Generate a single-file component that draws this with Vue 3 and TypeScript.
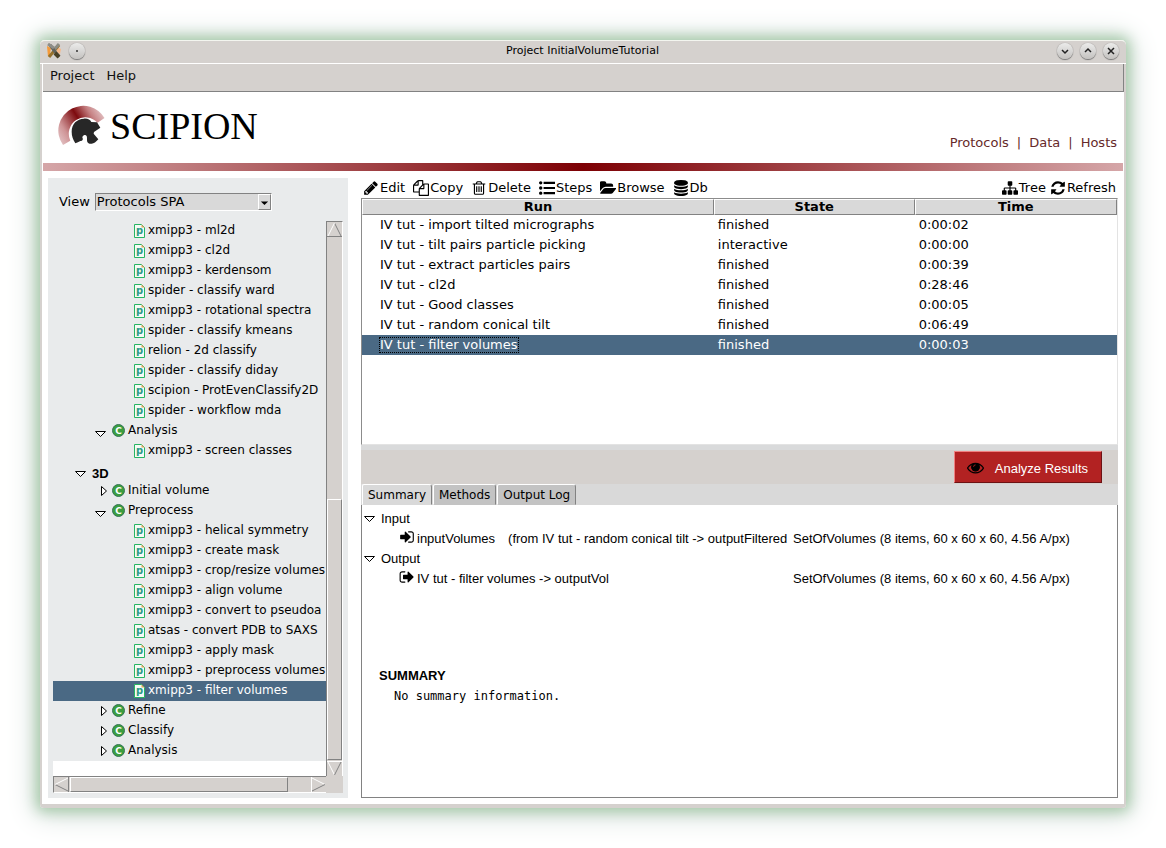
<script setup lang="ts">
import { ref } from 'vue'

interface TreeRow {
  kind: 'root' | 'group' | 'protocol'
  label: string
  open?: boolean
}

interface Run {
  name: string
  state: string
  time: string
}

interface Tool {
  label: string
  icon: string
}

const protocol = (label: string): TreeRow => ({ kind: 'protocol', label })
const group = (label: string, open = false): TreeRow => ({ kind: 'group', label, open })

const rows: TreeRow[] = [
  protocol('xmipp3 - ml2d'),
  protocol('xmipp3 - cl2d'),
  protocol('xmipp3 - kerdensom'),
  protocol('spider - classify ward'),
  protocol('xmipp3 - rotational spectra'),
  protocol('spider - classify kmeans'),
  protocol('relion - 2d classify'),
  protocol('spider - classify diday'),
  protocol('scipion - ProtEvenClassify2D'),
  protocol('spider - workflow mda'),
  group('Analysis', true),
  protocol('xmipp3 - screen classes'),
  { kind: 'root', label: '3D', open: true },
  group('Initial volume'),
  group('Preprocess', true),
  protocol('xmipp3 - helical symmetry'),
  protocol('xmipp3 - create mask'),
  protocol('xmipp3 - crop/resize volumes'),
  protocol('xmipp3 - align volume'),
  protocol('xmipp3 - convert to pseudoa'),
  protocol('atsas - convert PDB to SAXS'),
  protocol('xmipp3 - apply mask'),
  protocol('xmipp3 - preprocess volumes'),
  protocol('xmipp3 - filter volumes'),
  group('Refine'),
  group('Classify'),
  group('Analysis'),
]

const runs: Run[] = [
  { name: 'IV tut - import tilted micrographs', state: 'finished', time: '0:00:02' },
  { name: 'IV tut - tilt pairs particle picking', state: 'interactive', time: '0:00:00' },
  { name: 'IV tut - extract particles pairs', state: 'finished', time: '0:00:39' },
  { name: 'IV tut - cl2d', state: 'finished', time: '0:28:46' },
  { name: 'IV tut - Good classes', state: 'finished', time: '0:00:05' },
  { name: 'IV tut - random conical tilt', state: 'finished', time: '0:06:49' },
  { name: 'IV tut - filter volumes', state: 'finished', time: '0:00:03' },
]

const editTools: Tool[] = [
  { label: 'Edit', icon: 'M491 1536l91-91-235-235-91 91v107h128v128h107zm523-928q0-22-22-22-10 0-17 7l-542 542q-7 7-7 17 0 22 22 22 10 0 17-7l542-542q7-7 7-17zm-54-192l416 416-832 832h-416v-416zm683 96q0 53-37 90l-166 166-416-416 166-165q36-38 90-38 53 0 91 38l235 234q37 39 37 91z' },
  { label: 'Copy', icon: 'M1696 384q40 0 68 28t28 68v1216q0 40-28 68t-68 28h-960q-40 0-68-28t-28-68v-288h-544q-40 0-68-28t-28-68v-672q0-40 20-88t48-76l408-408q28-28 76-48t88-20h416q40 0 68 28t28 68v328q68-40 128-40h416zm-544 213l-299 299h299v-299zm-640-384l-299 299h299v-299zm196 647l316-316v-416h-384v416q0 40-28 68t-68 28h-416v640h512v-256q0-40 20-88t48-76zm956 804v-1152h-384v416q0 40-28 68t-68 28h-416v640h896z' },
  { label: 'Delete', icon: 'M704 736v576q0 14-9 23t-23 9h-64q-14 0-23-9t-9-23v-576q0-14 9-23t23-9h64q14 0 23 9t9 23zm256 0v576q0 14-9 23t-23 9h-64q-14 0-23-9t-9-23v-576q0-14 9-23t23-9h64q14 0 23 9t9 23zm256 0v576q0 14-9 23t-23 9h-64q-14 0-23-9t-9-23v-576q0-14 9-23t23-9h64q14 0 23 9t9 23zm128 724v-948h-896v948q0 22 7 40.5t14.5 27 10.5 8.5h832q3 0 10.5-8.5t14.5-27 7-40.5zm-672-1076h448l-48-117q-7-9-17-11h-317q-10 2-17 11zm928 32v64q0 14-9 23t-23 9h-96v948q0 83-47 143.5t-113 60.5h-832q-66 0-113-58.5t-47-141.5v-952h-96q-14 0-23-9t-9-23v-64q0-14 9-23t23-9h309l70-167q15-37 54-63t79-26h320q40 0 79 26t54 63l70 167h309q14 0 23 9t9 23z' },
  { label: 'Steps', icon: 'M192 128a192 192 0 1 1 0 384a192 192 0 1 1 0-384zM192 704a192 192 0 1 1 0 384a192 192 0 1 1 0-384zM192 1280a192 192 0 1 1 0 384a192 192 0 1 1 0-384zM512 200h1280v240h-1280zM512 776h1280v240h-1280zM512 1352h1280v240h-1280z' },
  { label: 'Browse', icon: 'M1815 952q0 31-31 66l-336 396q-43 51-120.5 86.5t-143.5 35.5h-1088q-34 0-60.5-13t-26.5-43q0-31 31-66l336-396q43-51 120.5-86.5t143.5-35.5h1088q34 0 60.5 13t26.5 43zm-343-344v160h-832q-94 0-197 47.5t-164 119.5l-337 396-5 6q0-4-.5-12.5t-.5-12.5v-960q0-92 66-158t158-66h320q92 0 158 66t66 158v32h544q92 0 158 66t66 158z' },
  { label: 'Db', icon: 'M896 768q237 0 443-43t325-127v170q0 69-103 128t-280 93.5-385 34.5-385-34.5-280-93.5-103-128v-170q119 84 325 127t443 43zm0 768q237 0 443-43t325-127v170q0 69-103 128t-280 93.5-385 34.5-385-34.5-280-93.5-103-128v-170q119 84 325 127t443 43zm0-384q237 0 443-43t325-127v170q0 69-103 128t-280 93.5-385 34.5-385-34.5-280-93.5-103-128v-170q119 84 325 127t443 43zm0-1152q208 0 385 34.5t280 93.5 103 128v128q0 69-103 128t-280 93.5-385 34.5-385-34.5-280-93.5-103-128v-128q0-69 103-128t280-93.5 385-34.5z' },
]

const viewTools: Tool[] = [
  { label: 'Tree', icon: 'M1792 1248v320q0 40-28 68t-68 28h-320q-40 0-68-28t-28-68v-320q0-40 28-68t68-28h96v-192h-512v192h96q40 0 68 28t28 68v320q0 40-28 68t-68 28h-320q-40 0-68-28t-28-68v-320q0-40 28-68t68-28h96v-192h-512v192h96q40 0 68 28t28 68v320q0 40-28 68t-68 28h-320q-40 0-68-28t-28-68v-320q0-40 28-68t68-28h96v-192q0-52 38-90t90-38h512v-192h-96q-40 0-68-28t-28-68v-320q0-40 28-68t68-28h320q40 0 68 28t28 68v320q0 40-28 68t-68 28h-96v192h512q52 0 90 38t38 90v192h96q40 0 68 28t28 68z' },
  { label: 'Refresh', icon: 'M1639 1056q0 5-1 7-64 268-268 434.5t-478 166.5q-146 0-282.5-55t-243.5-157l-129 129q-19 19-45 19t-45-19-19-45v-448q0-26 19-45t45-19h448q26 0 45 19t19 45-19 45l-137 137q71 66 161 102t187 36q134 0 250-65t186-179q11-17 53-117 8-23 30-23h192q13 0 22.5 9.5t9.5 22.5zm25-800v448q0 26-19 45t-45 19h-448q-26 0-45-19t-19-45 19-45l138-138q-148-137-349-137-134 0-250 65t-186 179q-11 17-53 117-8 23-30 23h-199q-13 0-22.5-9.5t-9.5-22.5v-7q65-268 270-434.5t480-166.5q146 0 284 55.5t245 156.5l130-129q19-19 45-19t45 19 19 45z' },
]

const signIn = 'M1312 896q0 26-19 45l-544 544q-19 19-45 19t-45-19-19-45v-288h-448q-26 0-45-19t-19-45v-384q0-26 19-45t45-19h448v-288q0-26 19-45t45-19 45 19l544 544q19 19 19 45zm352-352v704q0 119-84.5 203.5t-203.5 84.5h-320q-13 0-22.5-9.5t-9.5-22.5q0-4-1-20t-.5-26.5 3-23.5 10-19.5 20.5-6.5h320q66 0 113-47t47-113v-704q0-66-47-113t-113-47h-312l-11.5-1-11.5-3-8-5.5-7-9-2-13.5q0-4-1-20t-.5-26.5 3-23.5 10-19.5 20.5-6.5h320q119 0 203.5 84.5t84.5 203.5z'
const signOut = 'M704 1440q0 4 1 20t.5 26.5-3 23.5-10 19.5-20.5 6.5h-320q-119 0-203.5-84.5t-84.5-203.5v-704q0-119 84.5-203.5t203.5-84.5h320q13 0 22.5 9.5t9.5 22.5q0 4 1 20t.5 26.5-3 23.5-10 19.5-20.5 6.5h-320q-66 0-113 47t-47 113v704q0 66 47 113t113 47h312l11.5 1 11.5 3 8 5.5 7 9 2 13.5zm928-544q0 26-19 45l-544 544q-19 19-45 19t-45-19-19-45v-288h-448q-26 0-45-19t-19-45v-384q0-26 19-45t45-19h448v-288q0-26 19-45t45-19 45 19l544 544q19 19 19 45z'
const eye = 'M1664 960q-152-236-381-353 61 104 61 225 0 185-131.5 316.5t-316.5 131.5-316.5-131.5-131.5-316.5q0-121 61-225-229 117-381 353 133 205 333.5 326.5t434.5 121.5 434.5-121.5 333.5-326.5zM1792 960q0 34-20 69-140 230-376.5 368.5t-499.5 138.5-499.5-139-376.5-368q-20-35-20-69t20-69q140-229 376.5-368t499.5-139 499.5 139 376.5 368q20 35 20 69z'

const tabs = ['Summary', 'Methods', 'Output Log']
const activeTab = ref('Summary')
const selectedProtocol = ref('xmipp3 - filter volumes')
const selectedRun = ref('IV tut - filter volumes')
const view = ref('Protocols SPA')
</script>

<template>
  <div class="window">
    <header class="titlebar">
      <div class="title-side">
        <svg class="app-icon" viewBox="0 0 16 16" aria-hidden="true">
          <path d="M1 3L5 5L4 11L2 14Z" fill="#f59a3a" />
          <path d="M11 4L15 6L14 11L11 9Z" fill="#f7b98a" />
          <path d="M3 14L13 2" stroke="#96712c" stroke-width="3" />
          <path d="M7 8L13 1" stroke="#8b8c84" stroke-width="3" />
          <path d="M4 2L13 14" stroke="#62625c" stroke-width="3" />
          <path d="M9 10L13 14" stroke="#4a4026" stroke-width="4" />
          <path d="M2 1L8 5" stroke="#8d8d88" stroke-width="3" />
        </svg>
        <button class="round" aria-label="Window menu">
          <svg viewBox="0 0 16 16"><circle cx="8" cy="8" r="1" fill="#333" /></svg>
        </button>
      </div>
      <h1 class="title">Project InitialVolumeTutorial</h1>
      <div class="title-side title-end">
        <button class="round" aria-label="Minimize">
          <svg viewBox="0 0 16 16"><path d="M5 7L8 10L11 7" /></svg>
        </button>
        <button class="round" aria-label="Maximize">
          <svg viewBox="0 0 16 16"><path d="M5 9L8 6L11 9" /></svg>
        </button>
        <button class="round" aria-label="Close">
          <svg viewBox="0 0 16 16"><path d="M5 5L11 11M11 5L5 11" /></svg>
        </button>
      </div>
    </header>

    <nav class="menubar" aria-label="Main menu">
      <button class="menu">Project</button>
      <button class="menu">Help</button>
    </nav>

    <div class="banner">
      <div class="brand">
        <svg class="logo" viewBox="0 0 48 42" aria-hidden="true">
          <defs>
            <linearGradient id="crest" gradientUnits="userSpaceOnUse" x1="4" y1="40" x2="47" y2="13">
              <stop offset="0" stop-color="#e2c0c2" />
              <stop offset="0.2" stop-color="#cf9496" />
              <stop offset="0.55" stop-color="#7d0a0e" />
              <stop offset="0.8" stop-color="#c58082" />
              <stop offset="1" stop-color="#e0bcbe" />
            </linearGradient>
          </defs>
          <path d="M5 40A24.6 24.6 0 0 1 14 3.500A24.6 24.6 0 0 1 46.500 13L39.500 17.700A16.500 16.500 0 0 0 12.300 35.700Z" fill="url(#crest)" />
          <g transform="translate(-7 -10) scale(.3333)">
            <path d="M62 110C62 86 78 72 99 71C110 70 118 75 121 81L138 82L148 98L129 111L128 116L142 133C134 142 128 147 120 146C110 146 108 140 108 134C108 128 109 122 103 120C95 120 92 127 96 132L93 137C86 138 82 141 73 145C66 133 62 124 62 110Z" fill="#272727" />
          </g>
        </svg>
        <span class="wordmark">SCIPION</span>
      </div>
      <nav class="links" aria-label="Views">
        <a href="#protocols">Protocols</a><span>|</span><a href="#data">Data</a><span>|</span><a href="#hosts">Hosts</a>
      </nav>
    </div>
    <div class="stripe"></div>

    <main class="body">
      <aside class="sidebar">
        <div class="view-row">
          <label for="view">View</label>
          <span class="combo">
            <select id="view" v-model="view">
              <option>Protocols SPA</option>
            </select>
            <span class="combo-arrow"><svg viewBox="0 0 12 14"><path d="M2 7H10L6 11Z" /></svg></span>
          </span>
        </div>

        <div class="tree-area">
          <ul class="tree">
            <li
              v-for="(row, i) in rows"
              :key="i"
              :class="[row.kind, { selected: row.label === selectedProtocol }]"
              @click="selectedProtocol = row.label"
            >
              <svg v-if="row.kind !== 'protocol'" class="arrow" viewBox="0 0 12 20">
                <path v-if="row.open" d="M0.500 10.500H10.500L5.500 15.500Z" />
                <path v-else d="M6.500 5.500V14.500L11.500 10Z" />
              </svg>
              <svg v-if="row.kind === 'group'" class="badge" viewBox="0 0 13 13">
                <circle cx="6.500" cy="6.500" r="6" fill="#3c9e3e" stroke="#37745a" />
                <text x="6.500" y="10" text-anchor="middle">C</text>
              </svg>
              <svg v-if="row.kind === 'protocol'" class="page" viewBox="0 0 11 14">
                <path d="M0.500 0.500H7.500L10.500 3.500V13.500H0.500Z" fill="#f5fbf6" stroke="#27b562" />
                <path d="M7.500 0.500L10.500 3.500H7.500Z" fill="#e8a35a" />
                <text x="5.500" y="10" text-anchor="middle">p</text>
              </svg>
              <span class="label">{{ row.label }}</span>
            </li>
          </ul>
          <div class="vscroll">
            <button aria-label="Scroll up"><svg viewBox="0 0 15 15"><path class="lo" d="M7.500 1L14 14M0 14.500H15" /><path class="hi" d="M1 14L7.500 1" /></svg></button>
            <div class="vtrack"><div class="vthumb"></div></div>
            <button aria-label="Scroll down"><svg viewBox="0 0 15 15"><path class="hi" d="M7.500 14L1 1M0 0.500H15" /><path class="lo" d="M14 1L7.500 14" /></svg></button>
          </div>
          <div class="hscroll">
            <button aria-label="Scroll left"><svg viewBox="0 0 15 15"><path class="lo" d="M14.500 0V15M14 14L1 7.500" /><path class="hi" d="M1 7.500L14 1" /></svg></button>
            <div class="htrack"><div class="hthumb"></div></div>
            <button aria-label="Scroll right"><svg viewBox="0 0 15 15"><path class="hi" d="M14 7.500L1 1M0.500 0V15" /><path class="lo" d="M1 14L14 7.500" /></svg></button>
          </div>
          <div class="corner"></div>
        </div>
      </aside>

      <section class="content">
        <div class="toolbar">
          <button v-for="t in editTools" :key="t.label" class="tool">
            <svg viewBox="0 0 1792 1792"><path :d="t.icon" /></svg>{{ t.label }}
          </button>
          <span class="spacer"></span>
          <button v-for="t in viewTools" :key="t.label" class="tool tight">
            <svg viewBox="0 0 1792 1792"><path :d="t.icon" /></svg>{{ t.label }}
          </button>
        </div>

        <div class="runs">
          <table>
            <colgroup><col class="col-run" /><col class="col-state" /><col /></colgroup>
            <thead>
              <tr><th>Run</th><th>State</th><th>Time</th></tr>
            </thead>
            <tbody>
              <tr
                v-for="run in runs"
                :key="run.name"
                :class="{ selected: run.name === selectedRun }"
                @click="selectedRun = run.name"
              >
                <td><span class="run-name">{{ run.name }}</span></td>
                <td>{{ run.state }}</td>
                <td>{{ run.time }}</td>
              </tr>
            </tbody>
          </table>
        </div>

        <div class="actions">
          <button class="analyze">
            <svg viewBox="0 0 1792 1792"><path :d="eye" fill-rule="evenodd" /><circle cx="896" cy="870" r="440" /><path d="M690 830A210 210 0 0 1 900 620" class="glint" /></svg>
            <span>Analyze Results</span>
          </button>
        </div>

        <div class="tabs" role="tablist">
          <button
            v-for="tab in tabs"
            :key="tab"
            role="tab"
            :aria-selected="tab === activeTab"
            :class="{ active: tab === activeTab }"
            @click="activeTab = tab"
          >{{ tab }}</button>
        </div>

        <div class="details" role="tabpanel">
          <div class="io-head">
            <svg class="arrow" viewBox="0 0 12 20"><path d="M0.500 7.500H10.500L5.500 12.500Z" /></svg>Input
          </div>
          <div class="io-row">
            <div class="io-name">
              <svg viewBox="0 0 1792 1792"><path :d="signIn" /></svg>
              <span>inputVolumes</span>
              <span class="from">(from IV tut - random conical tilt -&gt; outputFiltered</span>
            </div>
            <div>SetOfVolumes (8 items, 60 x 60 x 60, 4.56 A/px)</div>
          </div>
          <div class="io-head">
            <svg class="arrow" viewBox="0 0 12 20"><path d="M0.500 7.500H10.500L5.500 12.500Z" /></svg>Output
          </div>
          <div class="io-row">
            <div class="io-name">
              <svg viewBox="0 0 1792 1792"><path :d="signOut" /></svg>
              <span>IV tut - filter volumes -&gt; outputVol</span>
            </div>
            <div>SetOfVolumes (8 items, 60 x 60 x 60, 4.56 A/px)</div>
          </div>
          <h2>SUMMARY</h2>
          <p>No summary information.</p>
        </div>
      </section>
    </main>
  </div>
</template>

<style>
body {
  margin: 0;
  background: #fff;
}
</style>

<style scoped>
* {
  box-sizing: border-box;
}
button {
  margin: 0;
  padding: 0;
  border: 0;
  background: none;
  color: inherit;
  font: inherit;
}
svg {
  display: block;
  flex: none;
}
.window {
  display: flex;
  flex-direction: column;
  min-height: calc(100vh - 80px);
  margin: 40px;
  padding: 0 3px;
  border-bottom: 4px solid #d5d1ce;
  border-radius: 5px 5px 4px 4px;
  background: linear-gradient(to right, #d5d1ce 2px, #fff 2px, #fff calc(100% - 2px), #d5d1ce calc(100% - 2px));
  box-shadow: 0 0 14px 3px #a2c8a5, 0 2px 28px 6px #d3ddd9;
  font: 13px/20px "DejaVu Sans", sans-serif;
  color: #000;
}
.titlebar {
  display: flex;
  align-items: center;
  height: 24px;
  margin: 0 -3px;
  padding: 0 7px 2px 6px;
  border-top: 1px solid #f3f5ef;
  border-bottom: 1px solid #fff;
  border-radius: 5px 5px 0 0;
  background: #d5d1ce;
}
.title-side {
  display: flex;
  flex: 1;
  align-items: center;
  gap: 7px;
}
.title-end {
  justify-content: flex-end;
}
.title {
  margin: 0;
  font-size: 11px;
  font-weight: normal;
  line-height: 20px;
}
.app-icon {
  width: 16px;
  height: 16px;
}
.round {
  width: 16px;
  height: 16px;
  border-radius: 50%;
  background: linear-gradient(#ebebea, #c4c2c0);
  box-shadow: 0 0 1px 0 #777, 0 1px 1px #777;
}
.round path {
  fill: none;
  stroke: #222;
  stroke-width: 1.5;
}
.menubar {
  display: flex;
  gap: 12px;
  height: 28px;
  margin-right: -1px;
  padding: 0 7px 3px;
  border-right: 1px solid #828282;
  border-bottom: 1px solid #828282;
  background: #d5d1ce;
}
.menu {
  color: #111;
}
.banner {
  display: flex;
  justify-content: space-between;
  height: 71px;
  padding: 13px 6px 0 15px;
}
.brand {
  display: flex;
  gap: 4px;
}
.logo {
  width: 48px;
  height: 42px;
}
.wordmark {
  font: 38px/42px "Liberation Serif", serif;
}
.links {
  display: flex;
  align-items: flex-end;
  gap: 8px;
  height: 48px;
  color: #662a2a;
}
.links a {
  color: inherit;
  text-decoration: none;
}
.stripe {
  height: 8px;
  background: linear-gradient(to right, #d5a6a8, #7d0004, #d5a6a8);
}
.body {
  display: grid;
  flex: 1;
  grid-template-columns: 300px minmax(0, 1fr);
  gap: 13px;
  padding: 7px 5px 6px;
  background: #fff;
}
.sidebar {
  display: flex;
  flex-direction: column;
  padding: 0 5px 5px;
  background: #e9ebec;
}
.view-row {
  display: flex;
  align-items: center;
  gap: 5px;
  height: 43px;
  padding: 4px 0 0 6px;
}
.combo {
  display: grid;
  width: 177px;
}
.combo select {
  grid-area: 1 / 1;
  width: 100%;
  height: 18px;
  margin: 0;
  padding: 0 1px;
  border: 1px solid;
  border-color: #828282 #fff #fff #828282;
  border-radius: 0;
  background: #d9d9d9;
  color: #000;
  font: inherit;
  line-height: 16px;
  appearance: none;
}
.combo-arrow {
  grid-area: 1 / 1;
  justify-self: end;
  width: 13px;
  height: 16px;
  margin: 1px;
  border: 1px solid;
  border-color: #fff #828282 #828282 #fff;
  background: #d9d9d9;
  pointer-events: none;
}
.tree-area {
  display: grid;
  flex: 1;
  grid-template: minmax(0, 1fr) 17px / minmax(0, 1fr) 17px;
}
.tree {
  margin: 0;
  padding: 0;
  overflow: hidden;
  background: #fff;
  font-size: 12px;
  list-style: none;
}
.tree li {
  display: flex;
  height: 20px;
  background: #e9ebec;
  white-space: nowrap;
}
.tree li.protocol {
  gap: 3px;
  padding-left: 81px;
}
.tree li.group {
  padding-left: 42px;
}
.tree li.root {
  gap: 5px;
  padding-left: 22px;
  font: bold 13px/20px "Liberation Sans", Arial, sans-serif;
}
.root .label {
  padding-top: 3px;
}
.label {
  line-height: 19px;
}
.tree li.selected {
  background: #4a6984;
  color: #fff;
}
.arrow {
  width: 12px;
  height: 20px;
  fill: #fff;
  stroke: #000;
}
.badge {
  width: 13px;
  height: 13px;
  margin: 3px 3px 0 5px;
}
.badge text {
  fill: #fff;
  font: bold 9px "DejaVu Sans", sans-serif;
}
.page {
  width: 11px;
  height: 14px;
  margin-top: 3px;
}
.page text {
  fill: #2c9a86;
  font: bold 10px "DejaVu Sans", sans-serif;
}
.vscroll,
.hscroll {
  display: flex;
  background: #d5d1ce;
}
.vscroll {
  flex-direction: column;
  border-top: 1px solid #828282;
  border-left: 1px solid #828282;
  border-right: 1px solid #fff;
}
.hscroll {
  border-top: 1px solid #828282;
  border-left: 1px solid #828282;
  border-bottom: 1px solid #fff;
}
.vscroll svg,
.hscroll svg {
  width: 15px;
  height: 15px;
  fill: none;
}
.hi {
  stroke: #fff;
}
.lo {
  stroke: #828282;
}
.vtrack,
.htrack {
  display: flex;
  flex: 1;
  padding: 1px 0;
}
.htrack {
  padding: 0 1px;
}
.vtrack {
  flex-direction: column;
  justify-content: flex-end;
}
.vthumb,
.hthumb {
  border: 1px solid;
  border-color: #fff #828282 #828282 #fff;
}
.vthumb {
  height: 50%;
}
.hthumb {
  width: 91%;
}
.corner {
  background: #d5d1ce;
}
.content {
  display: flex;
  flex-direction: column;
  min-width: 0;
}
.toolbar {
  display: flex;
  gap: 8px;
  height: 20px;
  padding: 0 2px;
}
.tool {
  display: flex;
  align-items: center;
  gap: 1px;
}
.tool.tight + .tight {
  margin-left: -4px;
}
.tool svg {
  width: 16px;
  height: 16px;
}
.spacer {
  flex: 1;
}
.runs {
  min-height: 247px;
  border: 1px solid;
  border-color: #8c8c8c #e3e3e3 #e3e3e3 #8c8c8c;
}
table {
  width: 100%;
  border-collapse: separate;
  border-spacing: 0;
  table-layout: fixed;
}
.col-run {
  width: 46.6%;
}
.col-state {
  width: 26.6%;
}
th {
  height: 16px;
  padding: 0;
  border: 1px solid;
  border-color: #fff #828282 #828282 #fff;
  background: #d9d9d9;
  line-height: 14px;
}
td {
  height: 20px;
  padding: 0 4px;
  line-height: 20px;
}
td:first-child {
  padding-left: 17px;
}
tr.selected td {
  background: #4a6984;
  color: #fff;
}
.run-name {
  display: inline-block;
  padding: 0 1px;
  line-height: 16px;
}
.selected .run-name {
  outline: 1px dotted #000;
  outline-offset: -1px;
}
.actions {
  display: flex;
  justify-content: flex-end;
  height: 39px;
  padding: 1px 16px 1px 0;
  border-top: 5px solid #d9dadb;
  background: #d5d1ce;
}
.analyze {
  display: flex;
  align-items: center;
  gap: 11px;
  height: 32px;
  padding: 0 13px 0 12px;
  border: 1px solid;
  border-color: #f08080 #6d1214 #6d1214 #f08080;
  background: #b22222;
  color: #fff;
  font: 13px/20px "Liberation Sans", Arial, sans-serif;
}
.analyze span {
  padding-top: 3px;
}
.analyze svg {
  width: 17px;
  height: 17px;
  fill: #000;
}
.glint {
  fill: none;
  stroke: #b22222;
  stroke-width: 90;
}
.tabs {
  display: flex;
  gap: 1px;
  height: 21px;
  padding-left: 1px;
  background: #d9d9d9;
}
.tabs button {
  padding: 0 5px;
  border: 1px solid;
  border-color: #fff #828282 transparent #fff;
  border-radius: 2px 3px 0 0;
  background: #c3c3c3;
  font-size: 12px;
  line-height: 18px;
}
.tabs .active {
  border-bottom-color: #d9d9d9;
  background: #d9d9d9;
}
.details {
  flex: 1;
  padding-top: 4px;
  border: 1px solid #828282;
  border-top: 0;
  font: 13px/20px "Liberation Sans", Arial, sans-serif;
}
.io-head {
  display: flex;
  gap: 5px;
  padding-left: 2px;
}
.io-row {
  display: grid;
  grid-template-columns: 426px minmax(0, 1fr);
  gap: 5px;
  white-space: nowrap;
}
.io-name {
  display: flex;
  padding-left: 37px;
}
.io-name svg {
  width: 16px;
  height: 16px;
  margin-right: 2px;
}
.from {
  margin-left: 13px;
}
h2 {
  margin: 77px 0 0 17px;
  font-size: 13px;
  line-height: 20px;
}
p {
  margin: 0 0 0 32px;
  font: 12px/20px "DejaVu Sans Mono", monospace;
}
</style>
